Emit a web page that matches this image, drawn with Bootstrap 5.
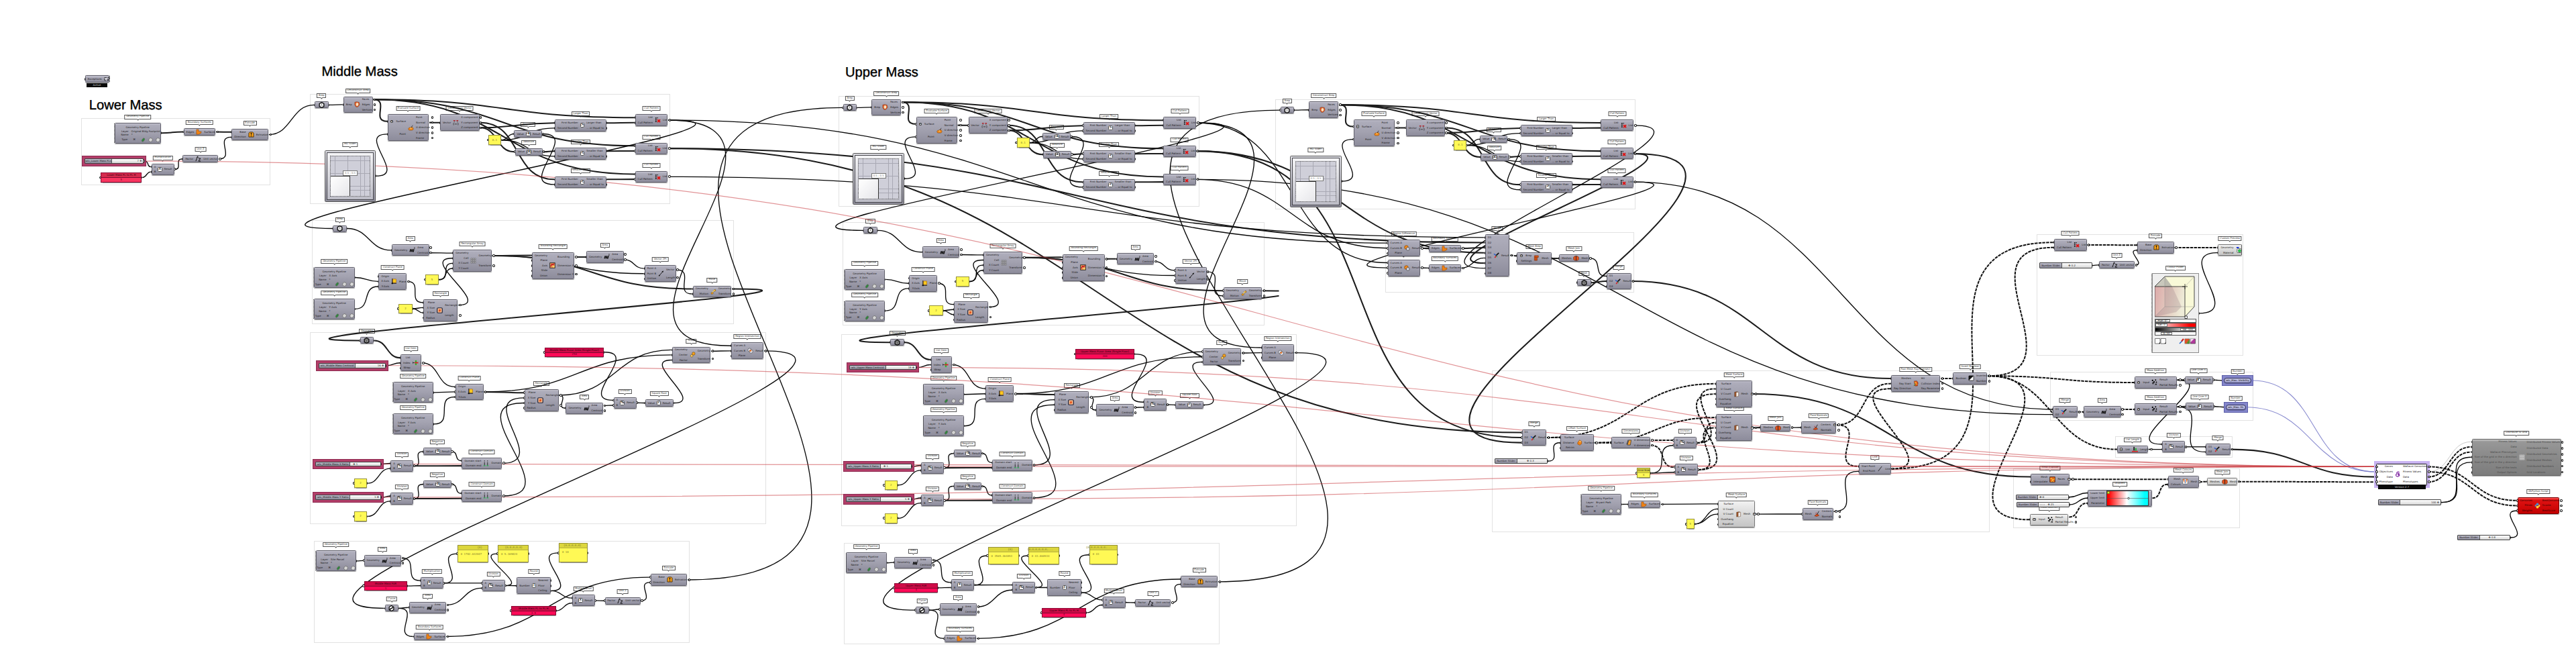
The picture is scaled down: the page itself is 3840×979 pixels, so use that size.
<!DOCTYPE html>
<html lang="en">

<head>
    <meta charset="UTF-8">
    <meta name="viewport" content="width=device-width, initial-scale=1.0">
    <title>Massing Definition</title>
    <link href="https://cdn.jsdelivr.net/npm/bootstrap@5.3.0/dist/css/bootstrap.min.css" rel="stylesheet">
    <style>
        body {
            background: #fff;
            overflow: hidden;
        }

        #board {
            width: 3840px;
            height: 979px;
            font-family: "DejaVu Sans", sans-serif;
            font-size: 3.85px;
            line-height: 1;
            color: #1d1d22;
            text-rendering: geometricPrecision;
            white-space: nowrap;
        }

        #board svg {
            display: block;
            flex: none;
        }

        #nodes,
        .genepool,
        .node.white {
            z-index: 0;
        }

        .zone {
            border: 1px solid #e2e2e2;
        }

        .heading {
            font: 20.2px/24px "Liberation Sans", sans-serif;
            color: #000;
            -webkit-text-stroke: .4px #000;
        }

        .tag-box {
            height: 7px;
            padding: 0 1.8px;
            border: .8px solid #555;
            background: #fff;
            color: #333;
            transform: translateX(-50%);
            font-size: 3.7px;
        }

        .tag-box::after {
            content: "";
            position: absolute;
            left: 50%;
            bottom: -2px;
            width: 3px;
            height: 3px;
            margin-left: -1.5px;
            background: #fff;
            border: solid #555;
            border-width: 0 .8px .8px 0;
            transform: rotate(45deg);
        }

        .node {
            border: 1px solid #63626e;
            border-radius: 1.5px;
            background: linear-gradient(#c8c7d2 0, #aeadbb 2px, #a3a2b0 45%, #8d8c9b 100%);
            box-shadow: 0 .5px 1px rgba(0, 0, 0, .35);
        }

        .node.light {
            border-color: #777;
            background: linear-gradient(#f2f2f2, #dedede 40%, #c4c4c4);
        }

        .node.off {
            border-color: #666;
            background: linear-gradient(#c8c8c8 0, #989898 3px, #8c8c8c 40%, #7c7c7c);
            color: #4b4b4b;
        }

        .node.err {
            border-color: #700;
            background: linear-gradient(#f55 0, #df1212 3px, #c40000);
            color: #300;
        }

        .node.white {
            border-color: #222;
            background: #fff;
        }

        .node.pill {
            border-color: #33345e;
            background: linear-gradient(#c3c4e2, #a2a4d2);
        }

        .port {
            flex: 1 1 0;
            min-height: 0;
            padding: 0 3px;
        }

        .grip::before {
            content: "";
            position: absolute;
            top: 50%;
            width: 3.4px;
            height: 3.6px;
            margin-top: -1.8px;
            border: .9px solid #111;
            border-radius: 50%;
            background: #fff;
            z-index: -1;
        }

        .grip.in::before {
            left: -2.2px;
        }

        .grip.out::before {
            right: -2.2px;
        }

        .jag {
            left: -1.6px;
            top: 0;
            bottom: 0;
            border-left: 1.6px dotted #444;
        }

        .jag.end {
            left: auto;
            right: -1.6px;
        }

        .opbox {
            width: 7px;
            height: 7px;
            border: .5px solid #555;
            border-radius: 1.5px;
            background: #fafafa;
            font-size: 5px;
            font-weight: bold;
            color: #111;
        }

        .tree {
            width: 4.4px;
            height: 4.4px;
            border: .6px solid #444;
            border-radius: 1px;
            background: #eee;
            font-size: 4px;
        }

        .memo {
            border: .8px solid #97933c;
            background: #fff955;
            color: #84802c;
            font-family: "DejaVu Sans Mono", monospace;
            font-size: 4px;
            box-shadow: 0 .5px 1px rgba(0, 0, 0, .4);
        }

        .memo .cap {
            height: 7px;
            background: #dcd63c;
            border-bottom: .5px solid #b5b040;
        }

        .memo.titled .cap {
            font-family: "DejaVu Sans", sans-serif;
            color: #222;
        }

        .memo.pink {
            border-color: #8d0b36;
            background: #fd0a57;
            color: #6c0026;
        }

        .memo.pink .cap {
            background: #cf0b48;
            border-bottom: .8px solid #7d0a30;
            color: #30000f;
            font-family: "DejaVu Sans", sans-serif;
            font-size: 3.9px;
        }

        .memo.soft {
            background: #f8355f;
        }

        .memo.soft .cap {
            background: #d52a4d;
        }

        .genepool {
            border: 1px solid #8e2a50;
            background: #b23e69;
            padding: 3px 2.8px 3px 3px;
        }

        .dial {
            border: .8px solid #444;
            border-radius: 1px;
            background: linear-gradient(#fff, #d6d6d6);
        }

        .dial .cap {
            background: linear-gradient(#bdbcca, #8c8b9a);
            border-right: .6px solid #555;
        }

        .track {
            background: repeating-linear-gradient(90deg, #bbb 0 .5px, transparent .5px 2px) 0 50% / 100% 2px no-repeat;
            margin: 0 2px;
        }

        .pad {
            border: 1px solid #555;
            border-radius: 1.5px;
            background: linear-gradient(#dedee4, #8f8e9b);
            padding: 2px;
        }

        .pad .rim {
            border: 1.3px solid #45454b;
            background: linear-gradient(#f4f4f6, #bcbcc6);
            padding: 4px;
        }

        .pad .mesh {
            background: repeating-linear-gradient(90deg, #a9a9b4 0 .5px, transparent .5px 6.3px), repeating-linear-gradient(#a9a9b4 0 .5px, transparent .5px 6.3px), #cfcfd9;
            border: .6px dotted #555;
        }

        .pad .fill {
            left: 0;
            bottom: 0;
            width: 50%;
            height: 50%;
            background: linear-gradient(135deg, #fff, #e6e6ea);
            border: solid #333;
            border-width: .7px .7px 0 0;
        }

        .pad .read {
            left: 50%;
            top: 36%;
            transform: translateX(-50%);
            background: #fff;
            border: .5px solid #777;
            padding: 1px 2px;
            color: #777;
        }

        .ramp {
            background: linear-gradient(90deg, #f00 4%, #fff 48%, #0ff 92%);
            border: .8px solid #333;
        }

        .bluezone {
            background: #8486cb;
            border: .8px solid #5b5da8;
        }

        .lilac {
            background: #c9b4f2;
        }

        .blacktag {
            background: #0a0a0a;
            color: #ddd;
        }

        .picker {
            border: 1.6px solid #8b8b8b;
            background: #efefef;
            padding: 2.5px 3px;
        }

        .picker .bar {
            height: 6.4px;
            border: .6px solid #555;
            background: #fff;
        }

        .picker .bar span {
            background: #fff;
            border: .5px solid #777;
            height: 100%;
            padding: 0 2.5px;
        }

        .picker .sat {
            background: linear-gradient(90deg, #fff, #f00 85%);
        }

        .picker .val {
            background: linear-gradient(90deg, #000, #eee 75%);
        }

        .picker .alpha span {
            margin-left: 8px;
        }
    </style>
</head>

<body>
    <div id="board" class="position-relative overflow-hidden">
        <div id="zones"></div>
        <div id="tags"></div>
        <svg id="wires" class="position-absolute top-0 start-0" width="3840" height="979" fill="none">
            <clipPath id="cut"><rect x="0" y="0" width="1906.5" height="979" /></clipPath>
        </svg>
        <div id="nodes" class="position-relative"></div>
    </div>

    <script src="https://cdn.jsdelivr.net/npm/bootstrap@5.3.0/dist/js/bootstrap.bundle.min.js"></script>
    <script>
        // icons are drawn on a 10x10 grid
        const icons = {
            hex: '<path d="M5 .6 8.700 2.600v4.800L5 9.400 1.300 7.400V2.600z" fill="#f5f5f5" stroke="#111" stroke-width="1.500"/><path d="M5 2v3L3 7m2-2 2 1.500" stroke="#777" stroke-width=".8" fill="none"/>',
            hexdark: '<path d="M5 .6 8.700 2.600v4.800L5 9.400 1.300 7.400V2.600z" fill="#8b8b8b" stroke="#111" stroke-width="1.500"/><path d="M2 3l3 1.500L8 3M5 4.500V9" stroke="#444" stroke-width=".7" fill="none"/>',
            hexcurve: '<path d="M5 .6 8.700 2.600v4.800L5 9.400 1.300 7.400V2.600z" fill="#fff" stroke="#111" stroke-width="1.400"/><path d="M2.500 7.500C4 3 6 7 7.500 2.500" stroke="#111" stroke-width="1.800" fill="none"/>',
            debrep: '<path d="M1 1.500 4 .8l4 .8 1 4-3 3.600H3L1 6z" fill="#e2602a" stroke="#7b2a10" stroke-width=".6"/><path d="M3 3.500 5 2l2 1.800-.4 3L4.500 8 3 6.500z" fill="#f7e3c0"/>',
            evals: '<path d="M1 6c1-2 3-1 4-2s3 0 4 2c0 2-1 3-3 3H3C1.500 9 .8 8 1 6z" fill="#f28a1c" stroke="#7b3b05" stroke-width=".6"/><path d="M5 5.500 8 .8" stroke="#111" stroke-width=".7"/><circle cx="5" cy="5.600" r=".9" fill="#fff6a0"/>',
            devec: '<path d="M1 2h3M6 2h3" stroke="#b3232a" stroke-width="1.800"/><path d="M2.500 3v2M7.500 3v2M2 6H1v3h1m6-3h1v3H8M3.500 6.500v2M5 6.500v2M6.500 6.500v2" stroke="#333" stroke-width=".7" fill="none"/>',
            cull: '<path d="M1 1h2v2H1zM1 4h2v2H1zM1 7h2v2H1zM4 1h1.500v1.500H4z" fill="#222"/><path d="m4.500 4.500 4.500 4.500m0-4.500L4.500 9" stroke="#e01010" stroke-width="1.900"/>',
            area: '<path d="M1 8 2 4h1L2 8m1.500 0 1-4h1l-1 4M6 8l1-4h1L7 8z" stroke="#111" stroke-width="1" fill="#111"/><path d="M8 .8h1.300L8.200 2.800h1.400" stroke="#111" stroke-width=".6" fill="none"/>',
            array: '<path d="M1 1h2v2H1zM4 1h2v2H4zM7 1h2v2H7zM1 4h2v2H1zM4 4h2v2H4zM7 4h2v2H7zM1 7h2v2H1zM4 7h2v2H4zM7 7h2v2H7z" fill="#ddd" stroke="#444" stroke-width=".5"/>',
            rect: '<rect x=".8" y=".8" width="8.400" height="8.400" rx="1.500" fill="#f5b98a" stroke="#1b2340" stroke-width="1.300"/><path d="m3 7 1-4 3 1-1 3z" fill="#e4521c"/>',
            plane: '<rect x="2.500" y="1" width="6" height="6" fill="#ffc81e" stroke="#a05a00" stroke-width=".6"/><path d="M2 0v8h7" stroke="#111" stroke-width="1" fill="none"/><circle cx="2" cy="8" r="1.300" fill="#111"/>',
            bound: '<rect x=".8" y=".8" width="8.400" height="8.400" fill="#f2a35c" stroke="#222" stroke-width="1"/><path d="m2 7 2-4 2 1 2-2" stroke="#c1121f" stroke-width="1.500" fill="none"/><circle cx="7" cy="7" r="1.300" fill="#ffe36b"/>',
            vec2: '<path d="M1.500 9 8.500 1" stroke="#111" stroke-width="1"/><circle cx="2" cy="8.400" r="1" fill="#111"/><path d="m8.800.6-.8 3-2-1.800z" fill="#111"/>',
            move: '<path d="m2 9 6-8" stroke="#333" stroke-width=".8"/><path d="m1 7 3-1 1 2-3 1.500zM5 3l3-1.500 1 2L6 5z" fill="#f6a51e" stroke="#6b4000" stroke-width=".5"/><path d="M3.500 6 7 2.500" stroke="#ffe16b" stroke-width="1.200"/>',
            unitz: '<path d="M1 9 4 1M3 3l1-2 1 2" stroke="#111" stroke-width="1.100" fill="none"/><path d="M5.500 4.500h3.300L5.500 9h3.500" stroke="#111" stroke-width="1.100" fill="none"/>',
            bsurf: '<path d="M1 1h3.500v3l2 .6L9 4.500 8.500 7 5 9H1z" fill="#f08314" stroke="#8f4300" stroke-width=".6"/>',
            extr: '<path d="M1 2.500 3 1h4l2 1.500V9H1z" fill="#f6a11a" stroke="#3a2200" stroke-width=".9"/><path d="M5 2.500v3.500M4 3.600l1-1.400 1 1.400M4 7.500h2" stroke="#111" stroke-width="1" fill="none"/>',
            item: '<path d="M0 5h3M0 3v4" stroke="#222" stroke-width="1"/><path d="M5.500 1v8" stroke="#34b234" stroke-width="2.600"/><path d="M3.500 5h6" stroke="#d92323" stroke-width="2"/>',
            scale: '<circle cx="6.500" cy="3.200" r="2.500" fill="#f6a11a" stroke="#6b4000" stroke-width=".6"/><circle cx="3.500" cy="7" r="2" fill="#ffd66b" stroke="#6b4000" stroke-width=".6"/>',
            rint: '<circle cx="3.800" cy="4" r="2.900" fill="#dfe2ee" stroke="#444" stroke-width=".7"/><circle cx="6.200" cy="6.300" r="2.900" fill="#dfe2ee" stroke="#444" stroke-width=".7"/><path d="M3.500 6.500 4 4l3-.2-.5 2.700z" fill="#e8701c"/>',
            rdif: '<circle cx="3.800" cy="3.900" r="3.100" fill="#f08a1c" stroke="#7a3c00" stroke-width=".7"/><circle cx="6.400" cy="6.600" r="2.600" fill="#d5d7e3" stroke="#444" stroke-width=".8"/>',
            dom: '<path d="M2.500 0v1.600M7.500 0v1.600M2.500 3v5M7.500 3v5" stroke="#222" stroke-width="1"/><path d="M1 8.800h3M6 8.800h3" stroke="#21b24b" stroke-width="1.500"/>',
            merge: '<path d="M1 2.500 5 5.500" stroke="#2b5fd0" stroke-width="1.600"/><path d="M2.500 9 5 5.500" stroke="#d4232b" stroke-width="1.800"/><path d="M4.500 5.500 9.200 1" stroke="#111" stroke-width="1.800"/><path d="M5 5 6.500 8" stroke="#2aa24c" stroke-width="1"/>',
            mbrep: '<path d="M1.500 1h6.500v3H6v5H1.500z" fill="#dd5b1c" stroke="#7a2600" stroke-width=".7"/><path d="M3.800 1v8M1.500 4H6" stroke="#7a2600" stroke-width=".5"/>',
            mjoin: '<path d="M.8 3.500 2.500 2h5l1.700 1.500v3.800L7.500 9h-5L.8 7.300z" fill="#e0521c" stroke="#601800" stroke-width=".6"/><path d="M5 1v8.500" stroke="#222" stroke-width="1"/>',
            offs: '<path d="M2 5 5 .8 8.500 3v4L5.500 9.300 2 7.500z" fill="#f08314" stroke="#8f4300" stroke-width=".6"/><path d="m4 3 2-1 2 1.500-2 1z" fill="#ffc56b"/>',
            dims: '<path d="M2 9 4.500 1h4L7 9z" fill="#f5a030" stroke="#222" stroke-width=".7"/><path d="M1 8 3.500.5" stroke="#111" stroke-width=".8"/>',
            msurf: '<path d="M2 1.500 6.500.7v7L2 9z" fill="#a85a2c" stroke="#4b2208" stroke-width=".6"/><path d="m4.500 2 4-.8v7l-4 1z" fill="#f1ede8" stroke="#6d4b35" stroke-width=".6"/>',
            fnorm: '<path d="M1 8.500 5.500 5l3 3-4 1.500z" fill="#e2521c" stroke="#6a1c00" stroke-width=".6"/><path d="M5 6.500 8.200.8" stroke="#222" stroke-width="1"/><path d="M3 5l1-2" stroke="#c22" stroke-width="1"/>',
            line: '<path d="m2 9 6-8" stroke="#111" stroke-width=".9"/>',
            fast: '<path d="M1.500 1 6 .8 8 4 7 9H3z" fill="#e2521c" stroke="#6a1c00" stroke-width=".6"/><path d="m2 2 5 5M5 2 3 7" stroke="#ffd23a" stroke-width=".9"/><path d="m1 9 3-4" stroke="#2c8b2c" stroke-width="1"/>',
            inv: '<rect x="1" y="1" width="8" height="8" rx="1" fill="#fff" stroke="#111" stroke-width=".8"/><path d="M1 1h8L1 9z" fill="#111"/>',
            prev: '<path d="M1 1h4" stroke="#1330d8" stroke-width="2.200"/><rect x="2" y="3" width="7" height="6.500" rx="1" fill="#fff" stroke="#222" stroke-width=".7"/><circle cx="6" cy="6.500" r="2.300" fill="#27d04b" stroke="#0a6b20" stroke-width=".6"/>',
            madd: '<circle cx="2" cy="2" r="1.300"/><circle cx="7" cy="1.500" r="1.100"/><circle cx="4.500" cy="4.500" r="1.300"/><circle cx="8.300" cy="5" r="1"/><path d="M1 6.500h3.500M2.700 5v3.500M6 7.500l3 2m0-2-3 2" stroke="#111" stroke-width="1"/>',
            expl: '<rect x=".8" y=".8" width="8.400" height="8.400" fill="#e0641c" stroke="#3a1500" stroke-width=".8"/><path d="m1 4 3-1 1 3 4-2M3 9l2-3 2 3" stroke="#ffd23a" stroke-width="1.100" fill="none"/>',
            mcol: '<rect x=".8" y=".8" width="8.400" height="8.400" rx="1" fill="#fff" stroke="#444" stroke-width=".7"/><path d="M1.200 1.200h2.500V8M8.800 1.200H6.500V8" fill="#e0641c"/><path d="M5 2v6" stroke="#37c" stroke-width="1"/>',
            llen: '<path d="M0 8.500h10" stroke="#d22" stroke-width="1.800"/><path d="M3.500 1v6" stroke="#222" stroke-width="2"/><path d="M6.500 3v4.500" stroke="#2fae3f" stroke-width="2.600"/>',
            wall: '<path d="M7.500 2C5 .3 2.300 2 3.500 4.500 1 5 1 9 4.500 9 8 9 8.500 6 6 5.500M4.500 4.500h3.500M6 3v4.500" stroke="#7a1fa0" stroke-width="1.300" fill="none"/>',
            dist: '<rect x=".5" y=".5" width="9" height="9" fill="#c9c9c9" stroke="#777" stroke-width=".4" stroke-dasharray="1 .7"/><path d="M2.200 2.500h.01M5 2.500h.01M7.800 2.500h.01M2.200 5h.01M5 5h.01M7.800 5h.01M2.200 7.700h.01M5 7.700h.01M7.800 7.700h.01" stroke="#444" stroke-width="1" stroke-linecap="round"/>',
            py: '<path d="M3 4.800V2Q3 .6 5 .6T7 2v2.500H4Q2.600 4.500 2.600 7 .6 7 .6 5T2.500 3H5" fill="#4b8bc8"/><path d="M7 5.200V8Q7 9.400 5 9.400T3 8V5.500h3Q7.400 5.500 7.400 3q2 0 2 2T7.500 7H5" fill="#ffd43b"/>',
            exc: '<path d="M.5 3h4M6 3l3-1M1 4.500v3l2 .5M5 5l1.500 3L9.500 3" stroke="#222" stroke-width="1" fill="none"/><path d="M2 4h3v2H2z" fill="#fff"/>'
        };

        // name, width, inputs, icon (or operator sign after "="), outputs
        const types = {
            brep: ['Brep', 20.5, 1, 'hex', 1],
            geo: ['Geometry', 20.5, 1, 'hexdark', 1],
            mesh: ['Mesh', 20.5, 1, 'hexdark', 1],
            curve: ['Curve', 20, 1, 'hexcurve', 1],
            debrep: ['Deconstruct Brep', 44, ['Brep'], 'debrep', ['Faces', 'Edges', 'Vertices']],
            evals: ['Evaluate Surface', 61, ['@Surface', 'Point'], 'evals', ['Point', 'Normal', 'U direction', 'V direction', 'Frame']],
            devec: ['Deconstruct Vector', 58.5, ['Vector'], 'devec', ['X component', 'Y component', 'Z component']],
            neg: ['Negative', 41.5, ['Value'], '=-x', ['Result']],
            abs: ['Absolute', 41.5, ['Value'], '=|x|', ['Result']],
            larger: ['Larger Than', 77, ['First Number', 'Second Number'], '=>', ['Larger than', '... or Equal to']],
            smaller: ['Smaller Than', 77, ['First Number', 'Second Number'], '=<', ['Smaller than', '... or Equal to']],
            cull: ['Cull Pattern', 48.5, ['List', 'Cull Pattern'], 'cull', ['List']],
            area: ['Area', 55.5, ['Geometry'], 'area', ['Area', 'Centroid']],
            array: ['Rectangular Array', 57.5, ['Geometry', 'Cell', 'X Count', 'Y Count'], 'array', ['Geometry', 'Transform']],
            plane: ['Construct Plane', 42, ['Origin', 'X-Axis', 'Y-Axis'], 'plane', ['Plane']],
            rect: ['Rectangle', 51, ['Plane', 'X Size', 'Y Size', 'Radius'], 'rect', ['Rectangle', 'Length']],
            bound: ['Bounding Rectangle', 63, ['Geometry', 'Plane', 'Axis', 'Slide', 'Union'], 'bound', ['Bounding', 'Dimension X', 'Dimension Y']],
            vec2: ['Vector 2Pt', 47, ['Point A', 'Point B', 'Unitize'], 'vec2', ['Vector', 'Length']],
            move: ['Move', 57.5, ['Geometry', 'Motion'], 'move', ['Geometry', 'Transform']],
            item: ['List Item', 31, ['List', 'Index', 'Wrap'], 'item', ['i']],
            scale: ['Scale', 57.5, ['Geometry', 'Center', 'Factor'], 'scale', ['Geometry', 'Transform']],
            rint: ['Region Intersection', 48, ['Curves A', 'Curves B', 'Plane'], 'rint', ['Result']],
            rdif: ['Region Difference', 48, ['Curves A', 'Curves B', 'Plane'], 'rdif', ['Result']],
            div: ['Division', 34, ['A', 'B'], '=%', ['Result']],
            mul: ['Multiplication', 34, ['A', 'B'], '=×', ['Result']],
            root: ['Square Root', 42, ['Value'], '=√', ['Result']],
            over: ['One Over X', 42, ['Value'], '=x\'', ['Result']],
            dom: ['Construct Domain', 59.5, ['Domain start', 'Domain end'], 'dom', ['Domain']],
            round: ['Round', 51, ['Number'], '=∤', ['Nearest', 'Floor', 'Ceiling']],
            bsurf: ['Boundary Surfaces', 47.5, ['Edges'], 'bsurf', ['Surfaces']],
            unitz: ['Unit Z', 53, ['Factor'], 'unitz', ['Unit vector']],
            extr: ['Extrude', 54.5, ['Base', 'Direction'], 'extr', ['Extrusion']],
            merge8: ['Merge', 36.5, ['D1', 'D2', 'D3', 'D4', 'D5', 'D6', 'D7', 'D8'], 'merge', ['Result']],
            merge3: ['Merge', 36.5, ['D1', 'D2', 'D3'], 'merge', ['Result']],
            merge2: ['Merge', 36.5, ['D1', 'D2'], 'merge', ['Result']],
            mbrep: ['Mesh Brep', 51.5, ['@Brep', 'Settings'], 'mbrep', ['Mesh']],
            mjoin: ['Mesh Join', 45, ['Meshes'], 'mjoin', ['Mesh']],
            offs: ['Offset Surface', 50, ['Surface', 'Distance', 'Retrim'], 'offs', ['Surface']],
            dims: ['Dimensions', 58, ['Surface'], 'dims', ['U dimension', 'V dimension']],
            msurf: ['Mesh Surface', 54.5, ['Surface', 'U Count', 'V Count', 'Overhang', 'Equalize'], 'msurf', ['Mesh@']],
            fnorm: ['Face Normals', 52, ['Mesh'], 'fnorm', ['Centers@', 'Normals']],
            line: ['Line', 47.5, ['Start Point', 'End Point'], 'line', ['Line']],
            fast: ['Fast Mesh Ray Intersect', 73.5, ['Meshes', 'Ray Start', 'Ray Direction'], 'fast', ['Hit', 'Collision Index', 'Ray Parameter']],
            inv: ['Invert Boolean', 51, ['Boolean'], 'inv', ['Inverted', 'Number']],
            prev: ['Custom Preview', 35.5, ['Geometry', 'Material'], 'prev', []],
            madd: ['Mass Addition', 62.5, ['@Input'], 'madd', ['Result', 'Partial Results']],
            llen: ['List Length', 46, ['@List'], 'llen', ['Length']],
            expl: ['Mesh Explode', 57.5, ['Mesh', 'Interpolate'], 'expl', ['Faces@']],
            mcol: ['Mesh Colours', 45.5, ['Mesh', 'Colours'], 'mcol', ['Mesh']],
            wall: ['', 76, ['Genes', 'Objectives', 'Data', 'Phenotype'], 'wall', ['Wallacei Genomes', 'Fitness Values', 'Data', 'Phenotypes']],
            dist: ['Distribute to Grid', 132.5, ['Fitness Values', 'Data', 'Wallacei Phenotypes', 'Size of the grid in the x direction', 'Size of the grid in the y direction', 'Size of the texts', 'Output Options'], 'dist', ['Distributed Fitness Values', 'Distributed Data', 'Distributed Geometries', 'Distributed Meshes', 'Distributed Numbers', 'Grid Locations']],
            py: ['GhPython Script', 62.5, ['Genomes', 'Fitnes', 'Weights'], 'py', ['BestGenome', 'Scores', 'BestScore']],
            exc: ['', 36.5, ['Exceptions'], 'exc', []]
        };

        const el = id => document.getElementById(id);
        const boxes = {};
        const html = { zones: '', tags: '', nodes: '', wires: '' };
        const at = (x, y, w, h) => `left:${x}px;top:${y}px` + (w ? `;width:${w}px;height:${h}px` : '');
        const svg = (name, size) => `<svg width="${size}" height="${size}" viewBox="0 0 10 10">${icons[name]}</svg>`;

        function zone(x, y, right, bottom) {
            html.zones += `<div class="zone position-absolute" style="${at(x, y, right - x, bottom - y)}"></div>`;
        }

        function heading(text, x, y) {
            html.zones += `<div class="heading position-absolute" style="${at(x, y)}">${text}</div>`;
        }

        function tag(text, cx, y) {
            html.tags += `<div class="tag-box position-absolute d-flex align-items-center" style="${at(cx, y - 12)}">${text}</div>`;
        }

        function put(id, x, y, w, h, ins, outs, body) {
            boxes[id] = { x, y, w, h, ins, outs };
            html.nodes += body;
        }

        function ports(list, side) {
            const end = side == 'in' ? 'justify-content-end' : 'justify-content-start';
            const tree = '<span class="tree d-flex align-items-center justify-content-center">+</span>';
            return list.map(p => {
                const text = `<span>${p.replace('@', '')}</span>`;
                const inner = p[0] == '@' ? tree + text : p.endsWith('@') ? text + tree : text;
                return `<div class="port grip ${side} position-relative d-flex align-items-center gap-1 ${end}">${inner}</div>`;
            }).join('');
        }

        function node(id, type, x, y, look = '', width = 0, height = 0) {
            const [name, tw, ins, icon, outs] = types[type];
            const w = width || tw;
            if (name) tag(name, x + w / 2, y);
            if (ins === 1) {
                put(id, x, y, w, 10, 1, 1, `<div class="node grip in position-absolute d-flex" style="${at(x, y, w, 10)}">
                    <div class="grip out position-relative w-100 d-flex align-items-center justify-content-center">${svg(icon, 9)}</div></div>`);
                return;
            }
            const rows = Math.max(ins.length, outs.length);
            const h = height || (rows == 1 ? 11 : rows * 7.65 + 1.9);
            const mid = icon[0] == '='
                ? `<div class="opbox d-flex align-items-center justify-content-center">${icon.slice(1).replace('<', '&lt;')}</div>`
                : svg(icon, 9);
            put(id, x, y, w, h, ins.length, outs.length, `<div class="node ${look} position-absolute d-flex align-items-center justify-content-between" style="${at(x, y, w, h)}">
                <div class="d-flex flex-column h-100 flex-fill">${ports(ins, 'in')}</div>${mid}
                <div class="d-flex flex-column h-100 ${outs.length ? 'flex-fill' : ''}">${ports(outs, 'out')}</div>
                ${outs.length ? '' : '<div class="jag end position-absolute"></div>'}</div>`);
        }

        function pipe(id, layer, x, y, w = 60.5) {
            tag('Geometry Pipeline', x + w / 2, y);
            const row = (k, v) => `<div class="d-flex gap-1 flex-fill align-items-center"><span class="text-end" style="width:${w * .29}px">${k}</span><span>${v}</span></div>`;
            const dot = (c, s) => `<svg width="7" height="7" viewBox="0 0 10 10"><ellipse cx="5" cy="5" rx="${s}" ry="4.200" fill="${c}" stroke="#666" transform="rotate(35 5 5)"/></svg>`;
            put(id, x, y, w, 31, 0, 1, `<div class="node position-absolute" style="${at(x, y, w, 31)}"><div class="jag position-absolute"></div>
                <div class="grip out position-relative h-100 d-flex flex-column">
                <div class="text-center flex-fill pt-1">Geometry Pipeline</div>${row('Layer', layer)}${row('Name', '*')}
                <div class="d-flex gap-1 flex-fill align-items-center"><span class="text-end" style="width:${w * .29}px">Type</span><span class="px-1">⌘</span>${dot('#2c8a3a', 2.3)}${dot('#d4d4d4', 4)}${dot('#dcdcdc', 4)}</div></div></div>`);
        }

        function memo(id, text, x, y, w = 19.5, h = 14.8, cap = '', look = '') {
            const value = `<div class="flex-fill d-flex ${h > 20 ? 'align-items-start p-1' : 'align-items-center justify-content-center'}">${text}</div>`;
            put(id, x, y, w, h, 1, 1, `<div class="position-absolute grip in" style="${at(x, y, w, h)};z-index:0">
                <div class="memo grip out ${look} position-relative h-100 d-flex flex-column">
                ${cap ? `<div class="cap d-flex align-items-center ${h > 20 ? 'justify-content-end px-2' : 'justify-content-center'}">${cap}</div>` : ''}${value}</div></div>`);
        }

        // pos: where the knob stands along the track, 0..1
        function dial(id, name, value, pos, x, y, w, cap = .42) {
            const left = pos > .6 ? `${value} <b>✥</b>` : `<b>✥</b> ${value}`;
            const inner = `<div class="dial grip out position-relative d-flex h-100 w-100"><div class="cap d-flex align-items-center justify-content-center" style="width:${cap * 100}%">${name}</div>
                <div class="track flex-fill d-flex align-items-center" style="padding-left:${pos > .6 ? 0 : pos * w * .4}px"><span class="${pos > .6 ? 'ms-auto' : ''}">${left}</span></div></div>`;
            const gene = name.startsWith('wlc');
            const h = gene ? 15.5 : 8.3;
            put(id, x, y, w - (gene ? 3 : 0), h, 0, 1, `<div class="position-absolute ${gene ? 'genepool' : ''}" style="${at(x, y, w, h)}">${inner}</div>`);
        }

        function pad(id, x, y) {
            tag('MD Slider', x + 38, y);
            put(id, x, y, 76.5, 77, 0, 1, `<div class="pad grip out position-absolute" style="${at(x, y, 76.5, 77)}"><div class="rim h-100"><div class="mesh h-100 position-relative">
                <div class="fill position-absolute"></div><div class="read position-absolute">0.5 ; 0.5</div></div></div></div>`);
        }

        function end(ref, side) {
            const [id, i] = ref.split('.');
            const b = boxes[id], n = side == 'in' ? b.ins : b.outs;
            return [side == 'in' ? b.x - 1 : b.x + b.w + 1, b.y + 1 + (b.h - 2) * ((+i || 0) + .5) / n];
        }

        const kinds = {
            s: 'stroke="#080808" stroke-width="1.35"',
            t: 'stroke="#1c1c1c" stroke-width="2.05"',
            d: 'stroke="#111" stroke-width="2" stroke-dasharray="4.500 1.300"',
            r: 'stroke="#c62f36" stroke-opacity=".52" stroke-width="1.200"',
            b: 'stroke="#7779c8" stroke-opacity=".85" stroke-width="1.150"',
            f: 'stroke="#bbb" stroke-width=".8"'
        };

        function wire(from, to, kind = 's', extra = '') {
            const [x1, y1] = end(from, 'out'), [x2, y2] = end(to, 'in');
            const d = Math.max(Math.abs(x2 - x1) / 2, Math.abs(y2 - y1) * .75);
            html.wires += `<path d="M${x1} ${y1}C${x1 + d} ${y1} ${x2 - d} ${y2} ${x2} ${y2}" ${kinds[kind]} ${extra}/>`;
        }

        // "a.0>b.1 t" lines, with a prefix for every id
        function link(text, p = '') {
            text.trim().split(/\s*;\s*/).filter(Boolean).forEach(row => {
                const [pair, kind] = row.split(' ');
                const [a, b] = pair.split('>');
                wire(p + a, p + b, kind);
            });
        }

        function facade(p, dx, dy) {
            const n = (id, t, x, y) => node(p + id, t, x + dx, y + dy);
            n('brep', 'brep', 469, 151.3);
            n('deb', 'debrep', 511.7, 143.5);
            pad(p + 'pad', 483.8 + dx, 223.7 + dy);
            n('ev', 'evals', 578, 170.2);
            n('vec', 'devec', 656, 170.3);
            n('neg', 'neg', 766.4, 194);
            n('abs', 'abs', 767.5, 220.7);
            n('c1', 'larger', 827, 178.4);
            n('c2', 'smaller', 827, 220.4);
            n('c3', 'smaller', 827, 262.5);
            n('k1', 'cull', 946.8, 170.4);
            n('k2', 'cull', 946.5, 212.5);
            n('k3', 'cull', 946.5, 254.7);
            memo(p + 'm', '0.1', 727.9 + dx, 201.3 + dy, 19);
            link(`brep>deb; deb.0>ev.0 t; pad>ev.1; ev.1>vec t; deb.0>k1.0 t; deb.0>k2.0 t; deb.0>k3.0 t;
                vec.2>c1.0 t; vec.2>abs t; vec.1>c3.0 t; m>neg; m>c1.1; m>c2.1; abs>c2.0 t; neg>c3.1;
                c1.0>k1.1 t; c2.0>k2.1 t; c3.0>k3.1 t`, p);
        }

        function mass(p, dx, dy, v) {
            const n = (id, t, x, y, w) => node(p + id, t, x + dx, y + dy, '', w);
            // grid of rectangles
            n('brep2', 'brep', 496.3, 335.5);
            n('a1', 'area', 584, 364.3);
            n('arr', 'array', 675.3, 372.3);
            pipe(p + 'px', 'X Axis', 468 + dx, 398 + dy);
            pipe(p + 'py', 'Y Axis', 468 + dx, 444.8 + dy);
            n('pl', 'plane', 564.3, 407);
            memo(p + 'five', '5', 634.3 + dx, 409.3 + dy);
            memo(p + 'two', '2', 594.3 + dx, 452.6 + dy, 20.5);
            n('re', 'rect', 631.3, 446);
            n('bo', 'bound', 792.9, 375.7);
            n('a2', 'area', 874, 374.4);
            n('v2', 'vec2', 960.7, 395.3);
            n('mo', 'move', 1032.7, 425.6);
            link(`k1>brep2; brep2>a1; a1.1>arr.0; px>pl.1; py>pl.2; pl>re.0; two>re.1; two>re.2; re.0>arr.1; five>arr.2; five>arr.3;
                arr.0>bo.0 t; arr.0>v2.1; arr.0>mo.0 t; bo.0>a2 t; a2.1>v2.0; v2.0>mo.1`, p);
            // ratio and orientation
            n('geo', 'geo', 536.6, 502.4);
            n('li', 'item', 597, 528.3);
            dial(p + 'sc', `wlc_${v.name} Mass Centroid`, v.centroid, .9, 471 + dx, 537 + dy, 108, .55);
            pipe(p + 'qx', 'X Axis', 585.5 + dx, 569.4 + dy);
            pipe(p + 'qy', 'Y Axis', 585.5 + dx, 616.4 + dy);
            n('pl2', 'plane', 678.6, 571.5);
            n('re2', 'rect', 781.5, 580.4);
            n('a3', 'area', 843.4, 599.6);
            n('d3', 'div', 914.6, 591.6);
            n('sq', 'root', 961.6, 595);
            n('sca', 'scale', 1001.7, 516.5);
            n('ri', 'rint', 1090, 510.4);
            memo(p + 'fa', v.area, 812.2 + dx, 517.5 + dy, 88, 14.5, `${v.name} Mass FLoor Area (Single Floor)`, 'pink');
            dial(p + 'sx', `wlc_${v.name} Mass X Ratio`, '1', .05, 466.4 + dx, 683.7 + dy + v.nudge, 105.5, .53);
            dial(p + 'sy', `wlc_${v.name} Mass Y Ratio`, '5', .9, 466.4 + dx, 733.2 + dy, 105.5, .53);
            n('dx', 'div', 582.2, 685.7);
            n('dy', 'div', 582.2, 734.4);
            n('nx', 'neg', 631, 667.4);
            n('ny', 'neg', 631, 716.2);
            n('ox', 'dom', 688.4, 681.7);
            n('oy', 'dom', 688.4, 730.4);
            memo(p + 'mx', '2', 527.7 + dx, 712.7 + dy);
            memo(p + 'my', '2', 527.7 + dx, 762 + dy);
            link(`geo>li.0 t; sc>li.1; li>pl2.0; qx>pl2.1; qy>pl2.2; pl2>re2.0 t; pl2>sca.1; re2.0>sca.0; re2.0>a3; a3.0>d3.1; fa>d3.0;
                d3>sq; sq>sca.2; sca.0>ri.1; k1>ri.0; sx>dx.0; sy>dy.0; mx>dx.1; my>dy.1; dx>nx; dy>ny; nx>ox.0; ny>oy.0; dx>ox.1 t; dy>oy.1 t;
                ox>re2.1; oy>re2.2`, p);
            // floors and height
            pipe(p + 'ps', 'Site Parcel', 470.5 + dx, 820.4 + dy);
            n('a4', 'area', 542.6, 826.7);
            n('mu', 'mul', 627, 860.3);
            memo(p + 'far', v.far, 542.6 + dx, 865.7 + dy, 64.5, 14.8, `${v.name} Mass FAR`, 'pink');
            memo(p + 'ya', '0 ' + v.a, 681.8 + dx, 812.3 + dy, 46, 25.7, '{0}');
            memo(p + 'yb', '0 ' + v.b, 742 + dx, 812.3 + dy, 46, 25.7, v.path);
            memo(p + 'yc', '0 ' + v.c, 833 + dx, 809.4 + dy, 42.5, 29, v.path);
            n('d4', 'div', 718.6, 864);
            n('ro', 'round', 770.3, 860.3);
            n('cu', 'curve', 573.8, 901.3);
            n('a5', 'area', 609.7, 896.6);
            n('bs', 'bsurf', 616.7, 943);
            memo(p + 'fh', v.floor, 762 + dx, 902.7 + dy, 66.5, 14.8, `${v.name} Mass FL to FL H`, 'pink');
            n('mu2', 'mul', 852.7, 886.3);
            n('uz', 'unitz', 901.6, 889.7);
            n('ex', 'extr', 969.5, 855.4);
            link(`ps>a4; a4.0>mu.0; far>mu.1; mu>ya; mu>d4.0; d4>yb; d4>ro; ro.2>yc; ro.2>mu2.0; fh>mu2.1; mu2>uz; uz>ex.1; bs>ex.0;
                cu>a5; cu>bs; a5.0>d4.1; ri>cu`, p);
        }

        // zones
        [[121.3, 175.5, 403.5, 275.5], [462, 139.8, 999, 304.5], [465, 328, 1094, 482.5], [462, 495, 1141.5, 781], [467.7, 805.7, 1028, 958],
        [1249.5, 143.4, 1788, 308.5], [1256, 331.3, 1884.7, 485], [1253.6, 498.3, 1932.6, 784], [1258, 808.7, 1817.6, 960.5],
        [1901, 147.5, 2438, 312], [2065, 346, 2436, 435.7], [2224.3, 552, 2966, 793],
        [3036.4, 349, 3344, 530], [3056.2, 553.5, 3359, 626.5], [3152.6, 649.5, 3328.5, 682], [3001.3, 698.3, 3339, 787]
        ].forEach(z => zone(...z));
        heading('Lower Mass', 132.8, 144.5);
        heading('Middle Mass', 479.5, 94.5);
        heading('Upper Mass', 1260, 96.3);

        // lower mass
        node('exc', 'exc', 126.7, 112.3);
        html.nodes += `<div class="blacktag position-absolute d-flex align-items-center justify-content-center" style="${at(129.3, 123.5, 30.5, 6)}">Active</div>`;
        pipe('pf', 'Original Bldg Footprint', 170.5, 182.7, 69.5);
        node('lb', 'bsurf', 273.5, 191);
        node('lx', 'extr', 345.3, 192);
        node('lz', 'unitz', 272.4, 231.3);
        node('lm', 'mul', 225.7, 243.7);
        dial('ls', 'wlc_Lower Mass FLs', '7', .9, 121.7, 232.3, 96.5, .47);
        memo('lh', '5', 150.3, 257, 61, 14.8, 'Lower Mass FL to FL H', 'pink soft');
        link('pf>lb t; lb>lx.0 t; lz>lx.1; ls>lm.0; lh>lm.1; lm>lz');

        facade('m', 0, 0);
        facade('u', 787.6, 4);
        facade('t', 1439.5, 7.8);
        mass('m', 0, 0, { name: 'Middle', centroid: 16, area: '250', far: '1', floor: '4.5', a: '1782.632047', b: '9.169824', c: '10', path: '{0;0;0;0;0}', nudge: 0 });
        mass('u', 790.8, 2.8, { name: 'Upper', centroid: 19, area: '200', far: '4', floor: '4', a: '3565.464093', b: '43.060934', c: '43', path: '{0;0;0;0;0;0;...', nudge: .8 });
        link('lx>mbrep; mex>ubrep; uex>tbrep; mmo.0>mgeo t');
        wire('umo.0', 'ugeo', 't', 'clip-path="url(#cut)"');

        // setback surfaces
        node('r1', 'rdif', 2068.6, 357.3);
        node('r2', 'rdif', 2068.6, 386.7);
        node('b1', 'bsurf', 2130, 364.6);
        node('b2', 'bsurf', 2130, 393.8);
        node('g8', 'merge8', 2213.7, 349);
        node('mb', 'mbrep', 2261.4, 376.4);
        node('mj', 'mjoin', 2323.9, 379.4);
        node('me', 'mesh', 2351, 416.2);
        node('g3', 'merge3', 2395, 406.6);

        // analysis grid
        node('h3', 'merge3', 2268.6, 639.6);
        node('os', 'offs', 2325.9, 647.3);
        node('di', 'dims', 2402, 651.3);
        node('va', 'div', 2494.5, 651.3);
        node('vb', 'div', 2496.5, 691.3);
        node('s1', 'msurf', 2557.7, 567);
        node('s2', 'msurf', 2557.7, 617.3);
        node('j2', 'mjoin', 2624.4, 631.6);
        node('f1', 'fnorm', 2685, 628.4);
        node('ln', 'line', 2771, 690);
        node('fm', 'fast', 2818.9, 559.2);
        node('ib', 'inv', 2911.4, 555.4);
        dial('so', 'Number Slider', '0.3', .4, 2228.4, 683, 78.5);
        memo('gs', '6', 2440.3, 697.4, 20, 15, 'Grid Size', 'titled');
        pipe('pb', 'Bryant Park', 2356.7, 736);
        node('b3', 'bsurf', 2427.4, 745.8);
        node('s3', 'msurf', 2561.2, 746, 'light');
        memo('m5', '5', 2514, 773.4, 11.5);
        node('f2', 'fnorm', 2686.5, 757.4, '', 46);

        // preview
        node('ck', 'cull', 3062, 356.4);
        dial('sz', 'Number Slider', '0.2', .25, 3040.4, 391.4, 78.5);
        node('z2', 'unitz', 3129, 389.3);
        node('x2', 'extr', 3186, 360.4);
        node('cp', 'prev', 3306.4, 364.2, 'light');
        tag('Colour Picker', 3243, 407.5);
        put('pk', 3208, 407.3, 69.5, 119, 0, 1, `<div class="picker grip out position-absolute d-flex flex-column" style="${at(3208, 407.3, 69.5, 119)}">
            <div class="jag position-absolute"></div>
            <svg width="61" height="64" viewBox="0 0 61 64"><linearGradient id="face" x2="1" y2=".2"><stop stop-color="#dca9a9"/><stop offset=".5" stop-color="#e2c8bd"/><stop offset="1" stop-color="#efecd8"/></linearGradient><path d="M15 1h44v45L45 61V16H0z" fill="#f9f9d8"/><path d="M0 16 15 1v15z" fill="#c9c8bc"/><path d="M15 1 26 16H15z" fill="#bdbcb0"/><path d="M0 16h45v45H0z" fill="url(#face)"/><path d="M15 16h11l14 30-8 8-32 7 15-15z" fill="#a98f92" opacity=".35"/><path d="M0 16h45v45H0zM0 16 15 1h44v45L45 61" fill="none" stroke="#222" stroke-width=".8"/><path d="M15 1v45h44M45 16 59 1M0 61l15-15" fill="none" stroke="#888" stroke-width=".4"/><path d="M45 12v8M41 16h8" stroke="#111" stroke-width=".7"/><rect x="45" y="60" width="3.500" height="3.500" fill="#fff" stroke="#111" stroke-width=".7"/></svg>
            <div class="bar d-flex"><span class="d-flex align-items-center">Hue: 0°</span></div>
            <div class="bar sat d-flex"><span class="d-flex align-items-center">Sat: 0</span></div>
            <div class="bar val d-flex justify-content-end"><span class="d-flex align-items-center">Val: 100</span></div>
            <div class="bar alpha d-flex"><span class="d-flex align-items-center">A: 50</span></div>
            <svg class="mt-1" width="61" height="9" viewBox="0 0 61 9"><path d="M.5.500h7.500V8H.5zM9 .5h7.500V8H9z" fill="#fff" stroke="#555" stroke-width=".8"/><path d="m6 8 2-2v2zM14.500 8l2-2v2z" fill="#111"/><path d="m37 8 4-4" stroke="#26c" stroke-width="1.500"/><path d="m40 4.500 3-3.500" stroke="#c22" stroke-width="2.200"/><rect x="45" y="1" width="7" height="7" fill="#5a9b2c" stroke="#333" stroke-width=".6"/><path d="M45 1h7l-5 7h-2z" fill="#e0502a"/><rect x="53.500" y="1" width="7" height="7" fill="#b23a9c" stroke="#333" stroke-width=".6"/><path d="M53.500 1h5l-5 5z" fill="#f4d8ee"/></svg></div>`);

        // objectives
        node('t1', 'madd', 3182, 561.4);
        node('o1', 'over', 3256.5, 560.7);
        node('t2', 'madd', 3182, 601.3);
        node('o2', 'over', 3258, 600.2);
        node('h2', 'merge2', 3060, 605.2);
        node('a9', 'area', 3106, 605.2);
        node('ll', 'llen', 3156, 664);
        node('v9', 'div', 3223.3, 657.2);
        node('w2', 'merge2', 3288, 661);
        function numberParam(id, text, x, y, w) {
            tag('Number', x + w / 2, y + 3);
            html.nodes += `<div class="bluezone position-absolute" style="${at(x, y, w, 15.5)}"></div>`;
            put(id, x + 3, y + 3.7, w - 6, 8, 1, 1, `<div class="node pill position-absolute d-flex align-items-center justify-content-center rounded-2" style="${at(x + 3, y + 3.7, w - 6, 8)}">${text}</div>`);
        }
        numberParam('n1', 'wlc_Max. Visibility', 3312, 559.3, 47);
        numberParam('n2', 'wlc_Max. FA', 3314.7, 599, 36);

        // coloured mesh
        node('xp', 'expl', 3027.3, 705.7);
        dial('g1', 'Number Slider', '0', 0, 3005, 736.6, 79);
        node('t3', 'madd', 3026.3, 765.7, 'light', 57);
        dial('g2', 'Number Slider', '25', .35, 3006, 747.7, 79);
        tag('Gradient', 3160, 729.7);
        put('gr', 3112, 729.7, 95.5, 25, 3, 1, `<div class="node position-absolute d-flex" style="${at(3112, 729.7, 95.5, 25)}">
            <div class="d-flex flex-column h-100">${ports(['Lower limit', 'Upper limit', 'Parameter'], 'in')}</div>
            <div class="ramp grip out position-relative flex-fill d-flex align-items-center me-1"><svg width="100%" height="23"><path d="M0 11.500h70" stroke="#555" stroke-width=".6"/><circle cx="32" cy="11.500" r="1.300" fill="#fff" stroke="#222" stroke-width=".8"/><circle cx="2" cy="3" r="1.800" fill="#e8e020" stroke="#3a3" stroke-width=".8"/></svg></div></div>`);
        node('mc', 'mcol', 3232, 709.4);
        node('j3', 'mjoin', 3290.3, 712.2, 'light');

        // solver
        html.nodes += `<div class="lilac position-absolute" style="${at(3539, 687, 83, 39.7)}"></div>
            <div class="blacktag position-absolute d-flex align-items-center justify-content-center" style="${at(3545, 723, 71, 5.5)}">Version 2.7</div>`;
        node('wa', 'wall', 3542.4, 690.6, 'white', 76, 32.4);
        dial('sd', 'Number Slider', '100', .9, 3545, 744.4, 94, .35);
        node('ds', 'dist', 3684.7, 653.5, 'off', 133, 55.5);
        node('pt', 'py', 3752.6, 741, 'err');
        dial('sw', 'Number Slider', '0.8', .35, 3663.4, 796.8, 78.5);

        link(`mk1>r1.0; mk2>g8.1 t; mk3>g8.0; mk2>h3.0 t; uk1>r2.0; uk2>g8.3 t; uk2>h3.1 t; uk3>r1.1; uk3>h2.1;
            tk1>g8.6; tk2>g8.5 t; tk2>h3.2 t; tk3>r2.1; tk3>h2.0;
            r1>b1 t; r2>b2; b1>g8.2 t; b2>g8.4; g8>mb.0 d; mb>mj t; mj>g3.0; me>g3.1 t; g3>fm.0 t`);
        link(`h3>os.0 d; so>os.1; os>di d; h3>s1.0 d; os>s2.0 d; di.0>va.0 d; di.1>vb.0 d; gs>va.1; gs>vb.1;
            va>s1.1 d; va>s2.1 d; vb>s1.2 d; vb>s2.2 d; s2>j2 t; j2>f1; f1.0>fm.1 d; f1.0>ln.0 d; ln>fm.2 d; ln>ck.0 d; s1>xp.0 t;
            pb>b3; b3>s3.0; m5>s3.1; m5>s3.2; s3>f2; f2.0>ln.1; fm.0>ib d; ib.0>ck.1 d; ib.0>t1 d; ib.0>ll d; ib.0>t3 d`);
        link(`ck>x2.0 d; sz>z2; z2>x2.1; x2>cp.0 d; pk>cp.1; t1.0>o1 t; o1>n1; t2.0>o2 t; o2>n2; t1.0>v9.0; h2>a9 d; a9.0>t2 d;
            ll>v9.1; v9>w2.0; t2.0>w2.1; w2>wa.2 t; n1>wa.1 b; n2>wa.1 b; xp>mc.0 d; g1>gr.0; g2>gr.1; t3.0>gr.2 d; gr>mc.1 d; mc>j3 d; j3>wa.3 d`);
        link(`ls>wa.0 r; msc>wa.0 r; msx>wa.0 r; msy>wa.0 r; usc>wa.0 r; usx>wa.0 r; usy>wa.0 r;
            wa.1>ds.0 f; wa.2>ds.1 d; wa.3>ds.2 d; sd>ds.3; sd>ds.4; wa.0>pt.0 d; wa.1>pt.1 d; sw>pt.2`);

        el('zones').innerHTML = html.zones;
        el('tags').innerHTML = html.tags;
        el('nodes').innerHTML = html.nodes;
        el('wires').innerHTML += html.wires;
    </script>
</body>

</html>
